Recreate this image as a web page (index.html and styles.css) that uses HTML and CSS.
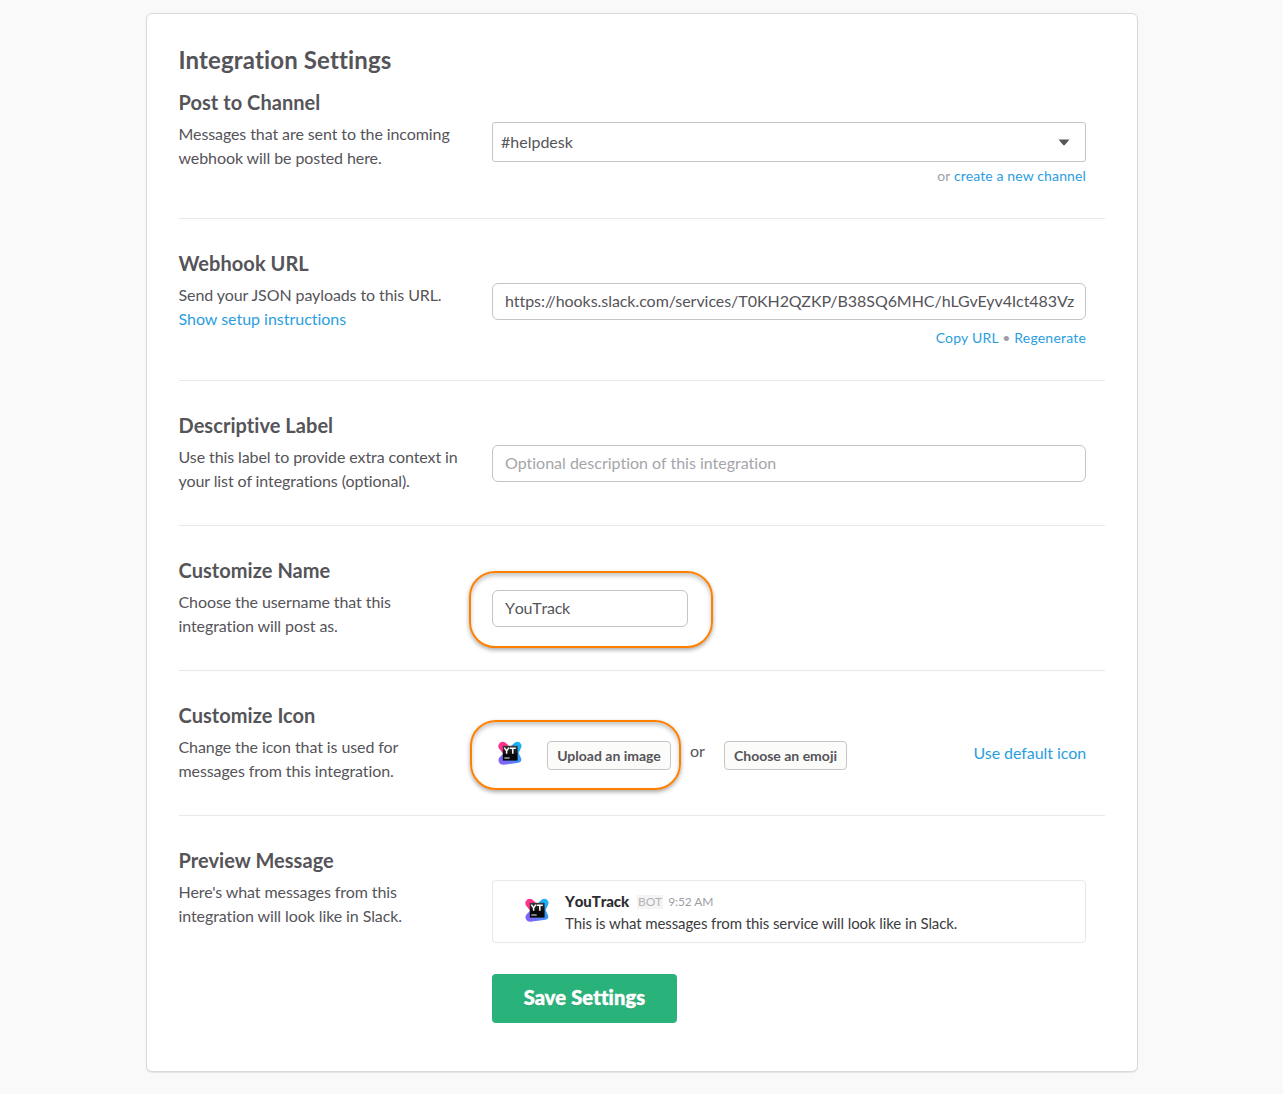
FILE: index.html
```html
<!DOCTYPE html>
<html lang="en">
<head>
<meta charset="utf-8">
<title>Integration Settings</title>
<link rel="stylesheet" href="styles.css">
</head>
<body>
<svg class="defs" width="0" height="0" aria-hidden="true">
  <defs>
    <linearGradient id="lg-blue" x1="0" y1="1" x2="1" y2="0.3">
      <stop offset="0" stop-color="#9357f5"/><stop offset="0.45" stop-color="#5f7bff"/><stop offset="1" stop-color="#15b5f5"/>
    </linearGradient>
    <linearGradient id="lg-box" x1="0" y1="0" x2="0" y2="1">
      <stop offset="0" stop-color="#3a3a3a"/><stop offset="0.6" stop-color="#080808"/>
    </linearGradient>
    <symbol id="youtrack" viewBox="0 0 24 24">
      <path d="M19.3 .8a4.2 4.2 0 0 1 3.6 6.4L20.6 12l2.6 5.4a3.6 3.6 0 0 1-2.6 4.4L5.4 23.8a4.6 4.6 0 0 1-4-7.3L15.8 2.4A4.5 4.5 0 0 1 19.3.8Z" fill="url(#lg-blue)"/>
      <path d="M4.8 .8a4.4 4.4 0 0 1 3.6 1.7L12 6 5.5 13 1.2 7.8A4.4 4.4 0 0 1 4.8 .8Z" fill="#ff318c"/>
      <path d="M4.8 4.8h14.8v14.8H4.8z" fill="url(#lg-box)"/>
      <path d="M6.3 6.6l2.3 3.3V12.8M10.9 6.6 8.6 9.9M11.8 7.2h6M14.8 7.2v5.6" fill="none" stroke="#fff" stroke-width="1.5"/>
      <path d="M6.3 17h5.4" stroke="#ccc" stroke-width="1.2"/>
    </symbol>
  </defs>
</svg>
<main class="card">
  <h1 class="title">Integration Settings</h1>

  <section class="row row-first">
    <div class="info">
      <h2>Post to Channel</h2>
      <p>Messages that are sent to the incoming<br>webhook will be posted here.</p>
    </div>
    <div class="control">
      <div class="select"><span>#helpdesk</span>
        <svg width="12" height="7" viewBox="0 0 12 7"><path d="M.5.5h11L7 5.8q-1 1-2 0Z" fill="#555459"/></svg>
      </div>
      <p class="note">or <a>create a new channel</a></p>
    </div>
  </section>

  <section class="row">
    <div class="info">
      <h2>Webhook URL</h2>
      <p>Send your JSON payloads to this URL.<br><a>Show setup instructions</a></p>
    </div>
    <div class="control">
      <div class="field field-url">https://hooks.slack.com/services/T0KH2QZKP/B38SQ6MHC/hLGvEyv4Ict483Vz</div>
      <p class="note note-url"><a>Copy URL</a> • <a>Regenerate</a></p>
    </div>
  </section>

  <section class="row">
    <div class="info">
      <h2>Descriptive Label</h2>
      <p>Use this label to provide extra context in<br>your list of integrations (optional).</p>
    </div>
    <div class="control">
      <div class="field placeholder">Optional description of this integration</div>
    </div>
  </section>

  <section class="row">
    <div class="info">
      <h2>Customize Name</h2>
      <p>Choose the username that this<br>integration will post as.</p>
    </div>
    <div class="control">
      <div class="field field-name">YouTrack</div>
      <div class="mark mark-name"></div>
    </div>
  </section>

  <section class="row">
    <div class="info">
      <h2>Customize Icon</h2>
      <p>Change the icon that is used for<br>messages from this integration.</p>
    </div>
    <div class="control icons">
      <svg class="logo" width="24" height="24"><use href="#youtrack"/></svg>
      <span class="btn btn-upload">Upload an image</span>
      <span class="or">or</span>
      <span class="btn btn-emoji">Choose an emoji</span>
      <a class="default">Use default icon</a>
      <div class="mark mark-icon"></div>
    </div>
  </section>

  <section class="row row-last">
    <div class="info">
      <h2>Preview Message</h2>
      <p>Here's what messages from this<br>integration will look like in Slack.</p>
    </div>
    <div class="control">
      <div class="preview">
        <svg class="logo" width="24" height="24"><use href="#youtrack"/></svg>
        <div class="message">
          <div class="meta"><b>YouTrack</b><span class="bot">BOT</span><span class="time">9:52 AM</span></div>
          <div class="text">This is what messages from this service will look like in Slack.</div>
        </div>
      </div>
      <div class="save">Save Settings</div>
    </div>
  </section>
</main>
</body>
</html>
```
FILE: styles.css
```css
* { box-sizing: border-box; }
body {
  margin: 0;
  padding: 13px 0 22px 146px;
  background: #f9f9f9;
  color: #555459;
  font: 16px/24px Lato, "Liberation Sans", sans-serif;
  font-variant-ligatures: none;
}
.defs { position: absolute; }
h1, h2, p { margin: 0; }
a { color: #2a9ee0; }
.card {
  width: 992px;
  height: 1059px;
  padding: 29px 32px 0;
  background: #fff;
  border: 1px solid #d9d9da;
  border-radius: 6px;
  box-shadow: 0 1px 1px rgba(0, 0, 0, .08);
}
.title { height: 47px; margin-left: -.5px; font-size: 24px; line-height: 34px; font-weight: 700; letter-spacing: .14px; }
.row {
  display: grid;
  grid-template-columns: 313px 594px;
  padding: 32px 0;
  border-bottom: 1px solid #e8e8e8;
}
.row-first { padding-top: 0; }
.row-last { border-bottom: 0; }
h2 { height: 32px; font-size: 20px; line-height: 24px; font-weight: 700; letter-spacing: .05px; }
.info { margin-left: -.5px; white-space: nowrap; }
.info p { letter-spacing: -.09px; }
.info a { letter-spacing: -.02px; }
.control { position: relative; padding-top: 32px; }
.select {
  display: flex;
  align-items: center;
  justify-content: space-between;
  height: 40px;
  padding: 0 15px 0 8px;
  border: 1px solid #c5c5c7;
  border-radius: 3px;
}
.note { height: 24px; padding-top: 4px; text-align: right; font-size: 14px; line-height: 20px; letter-spacing: .13px; color: #9e9ea6; }
.note-url { height: 28px; padding-top: 8px; letter-spacing: .2px; }
.field {
  height: 37px;
  padding: 0 12px;
  border: 1px solid #c5c5c7;
  border-radius: 6px;
  line-height: 34px;
  white-space: nowrap;
}
.field-url { letter-spacing: -.05px; }
.placeholder { color: #a5a5aa; letter-spacing: 0; }
.field-name { width: 196px; font-kerning: none; letter-spacing: -.25px; }
.mark {
  position: absolute;
  border: 2px solid #ff8000;
  border-radius: 26px;
  box-shadow: 0 2px 4px rgba(0, 0, 0, .35), inset 0 3px 4px rgba(0, 0, 0, .22);
}
.mark-name { left: -23px; top: 13px; width: 244px; height: 77px; }
.mark-icon { left: -22px; top: 17px; width: 211px; height: 70px; }
.icons { display: flex; align-items: flex-start; padding: 38px 0 0 6px; }
.btn {
  height: 29px;
  border: 1px solid #c5c5c7;
  border-radius: 4px;
  background: #fbfbfa;
  font-size: 14px;
  line-height: 28px;
  font-weight: 700;
  text-align: center;
  white-space: nowrap;
}
.btn-upload { width: 124px; margin-left: 25px; }
.btn-emoji { width: 123px; }
.or { width: 53px; padding-left: 19px; margin-top: -2px; }
.default { margin-left: auto; letter-spacing: -.07px; }
.preview {
  display: flex;
  height: 63px;
  padding: 10px 0 0 32px;
  border: 1px solid #e8e8e8;
  border-radius: 4px;
}
.preview .logo { margin: 7px 16px 0 0; }
.meta { display: flex; align-items: center; height: 20px; font-size: 12px; line-height: 20px; color: #9e9ea6; }
.meta b { font-size: 15px; font-weight: 900; color: #2c2d30; font-kerning: none; letter-spacing: -.1px; }
.bot { margin: 2px 5px 0 8px; padding: 0 1px; line-height: 14px; background: #f4f4f4; color: #b4b4b8; }
.time { padding-top: 2px; letter-spacing: -.1px; }
.text { font-size: 15px; line-height: 24px; letter-spacing: -.09px; color: #3d3c40; }
.save {
  width: 185px;
  height: 49px;
  margin-top: 31px;
  border-radius: 4px;
  background: #2ab27b;
  color: #fff;
  font-size: 20px;
  line-height: 47px;
  font-weight: 900;
  letter-spacing: .18px;
  text-align: center;
  text-shadow: 0 1px 1px rgba(0, 0, 0, .15);
  -webkit-text-stroke: .5px #fff;
}
```
